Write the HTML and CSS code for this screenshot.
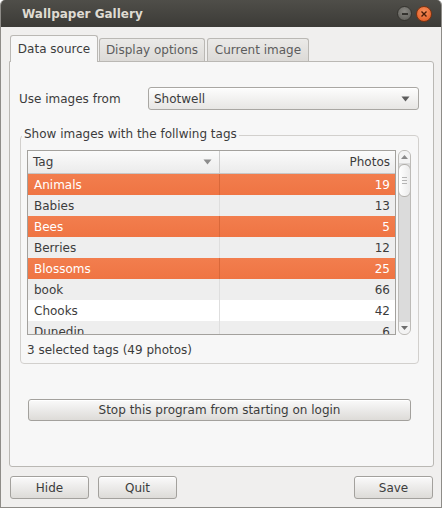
FILE: index.html
```html
<!DOCTYPE html>
<html lang="en">
<head>
<meta charset="utf-8">
<title>Wallpaper Gallery</title>
<link rel="stylesheet" href="styles.css">
</head>
<body>
<div class="window">
  <div class="titlebar">
    <span class="title">Wallpaper Gallery</span>
    <div class="wm-buttons">
      <span class="wm wm-min"><svg width="8" height="8" viewBox="0 0 8 8"><line x1="1" y1="4" x2="7" y2="4" stroke="#34332f" stroke-width="2"/></svg></span>
      <span class="wm wm-close"><svg width="8" height="8" viewBox="0 0 8 8"><path d="M1.5 1.5 L6.5 6.5 M6.5 1.5 L1.5 6.5" stroke="#4a1c08" stroke-width="1.4" fill="none"/></svg></span>
    </div>
  </div>
  <div class="body">
    <div class="tabs">
      <div class="tab tab-active">Data source</div>
      <div class="tab tab-display">Display options</div>
      <div class="tab tab-current">Current image</div>
    </div>
    <div class="panel">
      <div class="source-row">
        <span class="source-label">Use images from</span>
        <div class="combo">
          <span>Shotwell</span>
          <svg width="9" height="6" viewBox="0 0 9 6"><path d="M0.5 0.5 H8.5 L4.5 5.5 Z" fill="#5c5c5c"/></svg>
        </div>
      </div>
      <fieldset class="frame">
        <legend>Show images with the follwing tags</legend>
        <div class="list-area">
          <div class="tree">
            <div class="thead">
              <div class="hcol-tag"><span>Tag</span><svg width="9" height="6" viewBox="0 0 9 6"><path d="M0.5 0.5 H8.5 L4.5 5.5 Z" fill="#8c8c8c"/></svg></div>
              <div class="hcol-num">Photos</div>
            </div>
            <div class="rows">
              <div class="row sel"><div class="c-tag">Animals</div><div class="c-num">19</div></div>
              <div class="row"><div class="c-tag">Babies</div><div class="c-num">13</div></div>
              <div class="row sel"><div class="c-tag">Bees</div><div class="c-num">5</div></div>
              <div class="row"><div class="c-tag">Berries</div><div class="c-num">12</div></div>
              <div class="row sel"><div class="c-tag">Blossoms</div><div class="c-num">25</div></div>
              <div class="row"><div class="c-tag">book</div><div class="c-num">66</div></div>
              <div class="row"><div class="c-tag">Chooks</div><div class="c-num">42</div></div>
              <div class="row"><div class="c-tag">Dunedin</div><div class="c-num">6</div></div>
            </div>
          </div>
          <div class="vscroll">
            <div class="sb-btn"><svg width="7" height="4" viewBox="0 0 7 4"><path d="M0 4 H7 L3.5 0 Z" fill="#8a8a8a"/></svg></div>
            <div class="sb-thumb"><i></i><i></i><i></i></div>
            <div class="sb-track"></div>
            <div class="sb-btn"><svg width="7" height="4" viewBox="0 0 7 4"><path d="M0 0 H7 L3.5 4 Z" fill="#6e6e6e"/></svg></div>
          </div>
        </div>
        <div class="status">3 selected tags (49 photos)</div>
      </fieldset>
      <button class="btn stop">Stop this program from starting on login</button>
    </div>
    <div class="actions">
      <button class="btn act">Hide</button>
      <button class="btn act">Quit</button>
      <button class="btn act save">Save</button>
    </div>
  </div>
</div>
</body>
</html>
```
FILE: styles.css
```css
* { box-sizing: border-box; }
html, body { margin: 0; padding: 0; background: #ffffff; }
body {
  font-family: "DejaVu Sans", "Noto Sans", sans-serif;
  font-size: 12px;
  line-height: 14px;
  color: #3c3c3c;
}
.window {
  width: 442px;
  height: 508px;
  display: flex;
  flex-direction: column;
  background: #f0efee;
  border: 1px solid #8e8c88;
  border-top: 0;
  border-radius: 5px 5px 0 0;
  overflow: hidden;
}
.titlebar {
  height: 27px;
  flex: none;
  display: flex;
  align-items: center;
  padding: 0 10px 0 22px;
  background: linear-gradient(#4f4e49, #3c3b37);
  color: #dfdbd2;
  font-weight: bold;
  margin: 0 -1px;
}
.title { flex: 1; }
.wm-buttons { display: flex; align-items: center; gap: 4px; }
.wm {
  width: 15px;
  height: 15px;
  border-radius: 50%;
  display: flex;
  align-items: center;
  justify-content: center;
}
.wm-min {
  background: radial-gradient(circle at 50% 35%, #898883, #5b5a55);
  border: 1px solid #35342f;
}
.wm-close {
  width: 16px;
  height: 16px;
  background: radial-gradient(circle at 50% 35%, #f7915e, #e0551d);
  border: 1px solid #7c3311;
}
.body {
  flex: 1;
  display: flex;
  flex-direction: column;
  padding: 8px 7px 0 8px;
}
.tabs {
  height: 26px;
  display: flex;
  align-items: flex-end;
  padding-left: 1px;
}
.tab {
  height: 23px;
  display: flex;
  align-items: center;
  justify-content: center;
  border: 1px solid #bab8b4;
  border-bottom: 0;
  border-radius: 3px 3px 0 0;
  background: linear-gradient(#ebeae8, #dcdad7);
  color: #5c5c5c;
}
.tab-active {
  width: 88px;
  height: 27px;
  margin-bottom: -1px;
  margin-right: 1px;
  background: #f7f7f7;
  color: #3c3c3c;
  position: relative;
  z-index: 1;
}
.tab-display { width: 106px; margin-right: 2px; }
.tab-current { width: 102px; }
.panel {
  height: 406px;
  flex: none;
  display: flex;
  flex-direction: column;
  align-items: flex-start;
  border: 1px solid #bab8b4;
  border-radius: 0 3px 3px 3px;
  background: #f7f7f7;
  padding: 25px 14px 0 9px;
}
.source-row {
  align-self: stretch;
  height: 23px;
  display: flex;
  align-items: center;
}
.source-label { width: 129px; flex: none; }
.combo {
  flex: 1;
  height: 23px;
  display: flex;
  align-items: center;
  justify-content: space-between;
  padding: 0 8px 0 5px;
  border: 1px solid #a9a7a3;
  border-radius: 3px;
  background: linear-gradient(#fdfdfd, #e7e6e4);
  box-shadow: inset 0 1px #ffffff;
}
.frame {
  align-self: stretch;
  margin: 17px 0 0 1px;
  padding: 6px 7px 6px 6px;
  border: 1px solid #d2d0cd;
  border-radius: 4px;
  min-width: 0;
}
.frame legend {
  padding: 0 2px 3px;
  margin-left: -5px;
  line-height: 14px;
}
.list-area {
  display: flex;
  gap: 2px;
  height: 185px;
}
.tree {
  width: 369px;
  flex: none;
  display: flex;
  flex-direction: column;
  border: 1px solid #a3a19d;
  background: #ffffff;
}
.thead {
  height: 23px;
  flex: none;
  display: flex;
  background: linear-gradient(#fbfbfb, #ebebeb);
  border-bottom: 1px solid #c6c6c6;
}
.hcol-tag {
  width: 192px;
  flex: none;
  display: flex;
  align-items: center;
  justify-content: space-between;
  padding: 0 7px 0 5px;
  border-right: 1px solid #cdcdcd;
}
.hcol-num {
  flex: 1;
  display: flex;
  align-items: center;
  justify-content: flex-end;
  padding-right: 5px;
}
.rows { height: 160px; overflow: hidden; }
.row {
  height: 21px;
  display: flex;
  background: #ffffff;
}
.row:nth-child(even) { background: #eeeeee; }
.row.sel { background: linear-gradient(#f27e4e, #ef7443); color: #ffffff; }
.c-tag {
  width: 192px;
  flex: none;
  display: flex;
  align-items: center;
  padding-left: 6px;
  border-right: 1px solid #dedede;
}
.row.sel .c-tag { border-right-color: #d9683a; }
.c-num {
  flex: 1;
  display: flex;
  align-items: center;
  justify-content: flex-end;
  padding-right: 5px;
}
.vscroll {
  width: 13px;
  flex: none;
  display: flex;
  flex-direction: column;
  border: 1px solid #bdbbb7;
  border-radius: 6px;
  background: #dbdbdb;
  overflow: hidden;
}
.sb-btn {
  height: 12px;
  flex: none;
  display: flex;
  align-items: center;
  justify-content: center;
  background: #f3f3f3;
}
.sb-thumb {
  height: 33px;
  flex: none;
  margin: 1px -1px 0;
  display: flex;
  flex-direction: column;
  align-items: center;
  justify-content: center;
  gap: 2px;
  border: 1px solid #b2b0ac;
  border-radius: 6px;
  background: linear-gradient(90deg, #ffffff, #ebebeb);
}
.sb-thumb i {
  display: block;
  width: 5px;
  height: 1px;
  background: #b4b4b4;
}
.sb-track { flex: 1; }
.status {
  margin-top: 8px;
  line-height: 14px;
}
.btn {
  font: inherit;
  color: #3c3c3c;
  border: 1px solid #a3a19d;
  border-radius: 3px;
  background: linear-gradient(#fafafa, #dddbd8);
  box-shadow: inset 0 1px #ffffff;
  padding: 0;
}
.stop {
  width: 383px;
  height: 22px;
  margin: 35px 0 0 9px;
}
.actions {
  display: flex;
  gap: 9px;
  margin-top: 9px;
  padding: 0 1px;
}
.act { width: 79px; height: 23px; }
.save { margin-left: auto; }
```
